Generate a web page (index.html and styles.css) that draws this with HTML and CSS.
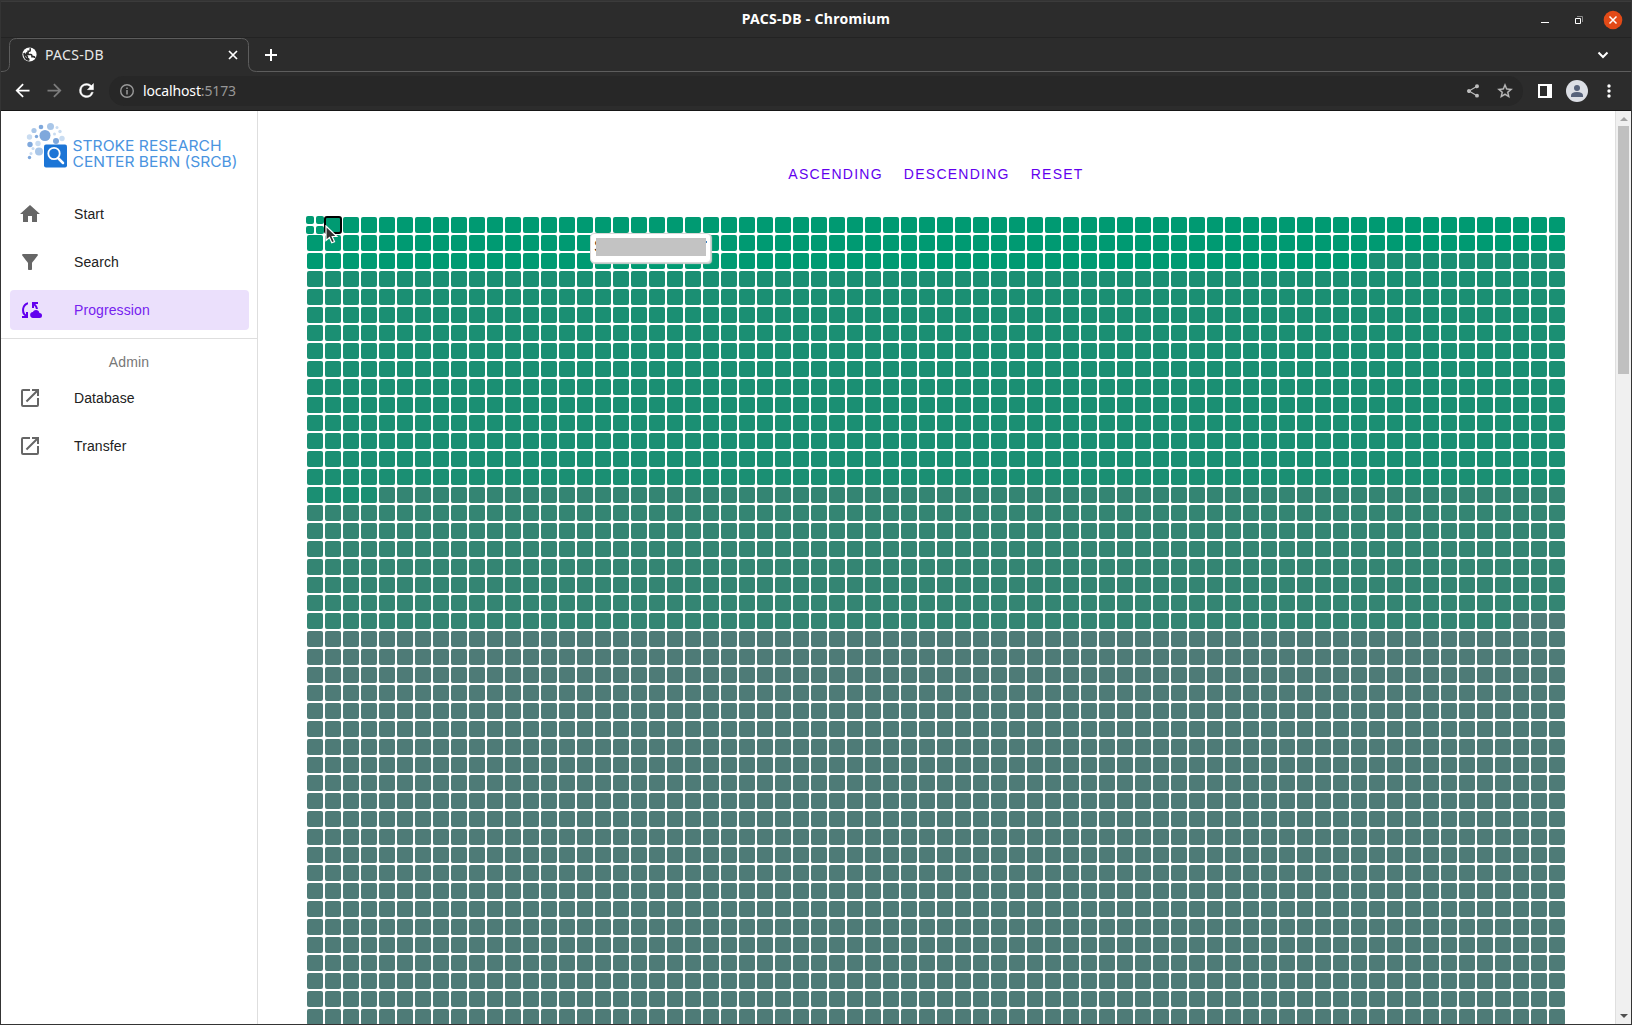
FILE: index.html
```html
<!DOCTYPE html>
<html lang="en">
<head>
<meta charset="utf-8">
<title>PACS-DB</title>
<link rel="stylesheet" href="styles.css">
</head>
<body>
<div class="window">
  <header class="titlebar">
    <span class="window-title">PACS-DB - Chromium</span>
    <div class="window-buttons">
      <svg width="100" height="24" viewBox="0 0 100 24">
        <path d="M10 15.500h8" stroke="#fff"/>
        <path d="M44.500 11.500h5v5h-5z" fill="none" stroke="#fff"/>
        <path d="M46 9.500h5.500v5.500" fill="none" stroke="#888"/>
        <circle cx="82" cy="13" r="9.300" fill="#e24a17"/>
        <path d="M78.500 9.500l7 7m0-7l-7 7" stroke="#fff" stroke-width="1.500"/>
      </svg>
    </div>
  </header>
  <div class="tabstrip">
    <svg class="tab-outline" width="1630" height="35" viewBox="0 0 1630 35"><path d="M0 34.500c6 0 8.500-2 8.500-8V8.500q0-7 7-7H240.500q7 0 7 7v18q0 8 8 8H1630" fill="none" stroke="#5d5d5d"/></svg>
    <div class="tab">
      <svg class="favicon" width="17" height="17" viewBox="0 0 24 24"><circle cx="12" cy="12" r="10" fill="#fff"/><path d="M4 10l5 5v2l2 1.500V20.500M4 10q1 9 7 10M13 3v3q0 1.500-2 1.500h-1V10h-2v2h6q1.500 0 1.500 3h2q2 0 2 2" fill="none" stroke="#2c2c2c" stroke-width="2.200"/></svg>
      <span class="tab-title">PACS-DB</span>
      <svg width="10" height="10" viewBox="0 0 10 10"><path d="M1 1l8 8m0-8l-8 8" stroke="#fff" stroke-width="1.700"/></svg>
    </div>
    <svg class="new-tab" width="12" height="12" viewBox="0 0 12 12"><path d="M6 0v12M0 6h12" stroke="#fff" stroke-width="2"/></svg>
    <svg class="tab-search" width="12" height="8" viewBox="0 0 12 8"><path d="M1.500 1.500L6 6l4.500-4.500" fill="none" stroke="#fff" stroke-width="2"/></svg>
  </div>
  <div class="toolbar">
    <div class="nav">
      <svg width="21" height="21" viewBox="0 0 24 24" fill="#fff"><path d="M20 11H7.830l5.590-5.590L12 4l-8 8 8 8 1.410-1.410L7.830 13H20z"/></svg>
      <svg width="21" height="21" viewBox="0 0 24 24" fill="#7c7c7c"><path d="M12 4l-1.410 1.410L16.170 11H4v2h12.170l-5.580 5.590L12 20l8-8z"/></svg>
      <svg width="21" height="21" viewBox="0 0 24 24" fill="#fff"><path stroke="#fff" stroke-width=".5" d="M17.650 6.350A7.960 7.960 0 0 0 12 4a8 8 0 1 0 7.730 10h-2.080A6 6 0 1 1 12 6c1.660 0 3.140.69 4.220 1.780L13 11h7V4z"/></svg>
    </div>
    <div class="omnibox">
      <svg width="16" height="16" viewBox="0 0 16 16"><circle cx="8" cy="8" r="6.300" fill="none" stroke="#9a9a9a" stroke-width="1.400"/><path d="M8 7v4.500M8 4.400v1.600" stroke="#9a9a9a" stroke-width="1.500"/></svg>
      <span class="url">localhost<span>:5173</span></span>
      <svg class="share" width="16" height="16" viewBox="0 0 24 24" fill="#bdbdbd"><path d="M18 16.080c-.76 0-1.440.3-1.960.77L8.910 12.700c.05-.23.09-.46.09-.7s-.04-.47-.09-.7l7.050-4.110c.54.5 1.250.81 2.040.81a3 3 0 1 0-3-3c0 .24.04.47.09.7L8.040 9.810A3 3 0 1 0 8.040 14.190l7.120 4.160c-.05.21-.08.43-.08.65a2.920 2.920 0 1 0 2.920-2.920z"/></svg>
      <svg width="18" height="18" viewBox="0 0 24 24" fill="#bdbdbd"><path stroke="#bdbdbd" stroke-width=".4" d="M22 9.240l-7.190-.62L12 2 9.190 8.630 2 9.240l5.460 4.730L5.820 21 12 17.270 18.180 21l-1.630-7.030zM12 15.400l-3.760 2.270 1-4.280-3.320-2.880 4.380-.38L12 6.100l1.710 4.040 4.380.38-3.320 2.880 1 4.280z"/></svg>
    </div>
    <svg class="panel" width="14" height="14" viewBox="0 0 14 14"><path fill="#fff" fill-rule="evenodd" d="M0 0h14v14H0zM2 2v10h7V2z"/></svg>
    <svg class="avatar" width="22" height="22" viewBox="0 0 22 22"><circle cx="11" cy="11" r="11" fill="#dcdfe5"/><circle cx="11" cy="8" r="3" fill="#56627a"/><path d="M5 17v-1.500q0-3.500 6-3.500t6 3.500V17z" fill="#56627a"/></svg>
    <svg class="menu" width="4" height="14" viewBox="0 0 4 14" fill="#fff"><circle cx="2" cy="2" r="1.700"/><circle cx="2" cy="7" r="1.700"/><circle cx="2" cy="12" r="1.700"/></svg>
  </div>

  <div class="page">
    <aside class="sidebar">
      <svg class="logo" width="220" height="56" viewBox="20 118 220 56">
        <g fill="#7fa8dc"><circle cx="45" cy="135.500" r="5.500"/><circle cx="41" cy="127" r="2.300"/><circle cx="56" cy="141" r="3"/><circle cx="30" cy="144.500" r="2.700"/><circle cx="36.500" cy="136.500" r="1.700"/><circle cx="29.500" cy="157.500" r="1.700"/></g>
        <g fill="#a9c6e8"><circle cx="50.500" cy="126.500" r="3.500"/><circle cx="34" cy="130.500" r="2.600"/><circle cx="39" cy="151.500" r="4"/></g>
        <g fill="#c9dcf1"><circle cx="29.500" cy="137" r="2.700"/><circle cx="38" cy="143.500" r="2.700"/><circle cx="62" cy="138.500" r="2.700"/><circle cx="57" cy="127.500" r="1.500"/><circle cx="60" cy="131.500" r="1.700"/><circle cx="54.500" cy="134" r="1.500"/><circle cx="33" cy="148.500" r="1.500"/><circle cx="31" cy="153.500" r="1.500"/></g>
        <rect x="44" y="144.500" width="23" height="23" rx="2" fill="#1c75d6"/>
        <circle cx="54" cy="153.500" r="5.700" fill="none" stroke="#fff" stroke-width="1.800"/><path d="M58 158l5 5" stroke="#fff" stroke-width="2.500" stroke-linecap="round"/>
        <text x="72.500" y="151" textLength="149" lengthAdjust="spacingAndGlyphs">STROKE RESEARCH</text>
        <text x="72.500" y="166.500" textLength="165" lengthAdjust="spacingAndGlyphs">CENTER BERN (SRCB)</text>
      </svg>
      <nav class="list">
        <a class="item"><svg width="24" height="24" viewBox="0 0 24 24"><path d="M10 20v-6h4v6h5v-8h3L12 3 2 12h3v8z"/></svg>Start</a>
        <a class="item"><svg width="24" height="24" viewBox="0 0 24 24"><path d="M4.250 5.610C6.270 8.200 10 13 10 13v6c0 .55.45 1 1 1h2c.55 0 1-.45 1-1v-6s3.720-4.800 5.740-7.390A1 1 0 0 0 18.950 4H5.040a1 1 0 0 0-.79 1.610z"/></svg>Search</a>
        <a class="item active"><svg width="24" height="24" viewBox="0 0 24 24"><path d="M21.500 14.980l-.05.01C21.200 13.300 19.760 12 18 12c-1.400 0-2.600.83-3.160 2.020A3 3 0 0 0 15 20l6.500-.02a2.500 2.500 0 0 0 0-5zM10 4.260v2.090A6 6 0 0 0 8 16.440V14h2v6H4v-2h2.730A8 8 0 0 1 10 4.260zM20 6h-2.730c1.430 1.260 2.410 3.010 2.660 5h-2.020A6 6 0 0 0 16 7.560V10h-2V4h6z"/></svg>Progression</a>
      </nav>
      <div class="group-label">Admin</div>
      <nav class="list admin">
        <a class="item"><svg width="24" height="24" viewBox="0 0 24 24"><path d="M19 19H5V5h7V3H5a2 2 0 0 0-2 2v14a2 2 0 0 0 2 2h14a2 2 0 0 0 2-2v-7h-2zM14 3v2h3.590l-9.830 9.830 1.410 1.410L19 6.410V10h2V3z"/></svg>Database</a>
        <a class="item"><svg width="24" height="24" viewBox="0 0 24 24"><path d="M19 19H5V5h7V3H5a2 2 0 0 0-2 2v14a2 2 0 0 0 2 2h14a2 2 0 0 0 2-2v-7h-2zM14 3v2h3.590l-9.830 9.830 1.410 1.410L19 6.410V10h2V3z"/></svg>Transfer</a>
      </nav>
    </aside>
    <main class="content">
      <div class="actions"><button>Ascending</button><button>Descending</button><button>Reset</button></div>
      <div class="grid" id="grid"></div>
    </main>
    <div class="scrollbar">
      <svg width="8" height="4" viewBox="0 0 8 4"><path d="M4 0l4 4H0z" fill="#a3a3a3"/></svg>
      <div class="thumb"></div>
      <svg class="down" width="8" height="4" viewBox="0 0 8 4"><path d="M4 4l4-4H0z" fill="#505050"/></svg>
    </div>
  </div>
  <div class="tooltip"><span class="tip-text">S</span><span class="redacted"></span><span class="tip-end"></span></div>
  <svg class="cursor" width="14" height="20" viewBox="0 0 14 20"><path d="M1 1v14.500l3.500-3 2.300 5.300 2.700-1.200-2.300-5.100h4.600z" fill="#303030" stroke="#fff" stroke-width="1.200"/></svg>
</div>
<script src="grid.js"></script>
</body>
</html>
```
FILE: styles.css
```css
* { box-sizing: border-box; }
body { margin: 0; background: #2c2c2c; font-family: "Liberation Sans", Arial, sans-serif; }
svg { display: block; flex: none; }
.window { position: relative; width: 1632px; height: 1025px; overflow: hidden; display: flex; flex-direction: column; border: 1px solid #343434; background: #2c2c2c; }

.titlebar { height: 37px; flex: none; display: grid; grid-template-columns: 1fr auto 1fr; align-items: center; padding-bottom: 2px; border-top: 1px solid #3b3b3b; border-bottom: 1px solid #232323; }
.window-title { grid-column: 2; color: #fff; font: bold 14px "Noto Sans", sans-serif; letter-spacing: .28px; }
.window-buttons { justify-self: end; }

.tabstrip { position: relative; height: 34px; flex: none; display: flex; align-items: center; padding-left: 20px; }
.tab-outline { position: absolute; left: 0; top: -1px; }
.tab { width: 217px; display: flex; align-items: center; }
.favicon { margin-bottom: 1px; }
.tab-title { flex: 1; margin: 0 0 2px 7px; color: #e8e8e8; font: 14px "Noto Sans", sans-serif; letter-spacing: .3px; }
.new-tab { margin-left: 27px; }
.tab-search { margin-left: auto; margin-right: 22px; }

.toolbar { height: 39px; flex: none; display: flex; align-items: center; padding: 0 18px 1px 11px; border-bottom: 1px solid #161616; }
.nav { display: flex; gap: 11px; width: 97px; }
.omnibox { width: 1414px; height: 30px; display: flex; align-items: center; border-radius: 15px; background: #272727; padding: 0 9px 0 10px; }
.url { flex: 1; margin: 0 0 1px 8px; color: #fff; font: 14px "Noto Sans", sans-serif; letter-spacing: -.15px; }
.url span { color: #979797; }
.share { margin-right: 15px; }
.panel { margin-left: 15px; }
.avatar { margin-left: 14px; }
.menu { margin-left: 19px; }

.page { flex: 1; min-height: 0; display: flex; background: #fff; overflow: hidden; }
.sidebar { width: 257px; flex: none; border-right: 1px solid #dedede; padding-top: 7px; }
.logo { margin-left: 19px; }
.logo text { font: 400 15px Inter, Lato, sans-serif; fill: #4a94df; }
.list { display: flex; flex-direction: column; gap: 8px; padding: 20px 8px 8px 9px; border-bottom: 1px solid #dedede; }
.item { height: 40px; border-radius: 4px; display: flex; align-items: center; gap: 32px; padding-left: 8px; font-size: 14px; letter-spacing: .1px; color: #212121; }
.item svg { fill: #666; }
.active { background: #ebe0fc; color: #7622ef; }
.active svg { fill: #6200ee; }
.group-label { height: 39px; display: flex; align-items: center; justify-content: center; padding-top: 7px; font-size: 14px; letter-spacing: .2px; color: #777; }
.admin { padding-top: 0; border: 0; }

.content { flex: 1; min-width: 0; padding: 45px 0 0 49px; }
.actions { width: 1258px; height: 36px; display: flex; justify-content: center; gap: 5px; margin-bottom: 25px; }
.actions button { border: 0; background: none; padding: 0 8px; color: #6200ee; font: 14px "Liberation Sans", Arial, sans-serif; letter-spacing: 1.25px; text-transform: uppercase; }
.grid { display: grid; grid-template-columns: repeat(70, 16px); grid-auto-rows: 16px; gap: 2px; }
.cell { border-radius: 2px; }
.high { background: #009a72; }
.good { background: #1b8f73; }
.medium { background: #348573; }
.low { background: #4e7b77; }
.split { margin: -1px; display: grid; grid-template-columns: 8px 8px; grid-auto-rows: 8px; gap: 2px; }
.split i { border-radius: 2px; background: #009a72; }
.selected { margin: -1px; border: 2px solid #000; border-radius: 3px; }

.scrollbar { width: 16px; flex: none; display: flex; flex-direction: column; align-items: center; background: #f0f0f0; border-left: 1px solid #dfdfdf; padding: 6px 0; }
.thumb { width: 11px; height: 248px; margin-top: 5px; background: #c0c0c0; }
.down { margin-top: auto; }

.tooltip { position: absolute; left: 589px; top: 232px; width: 121px; height: 30px; display: flex; align-items: flex-start; padding: 4px 3px; border: 1px solid #d8d8d8; border-radius: 4px; background: #fff; box-shadow: 1px 1px 1px #d0d0d0; }
.tip-text { width: 2px; overflow: hidden; font-size: 16px; line-height: 18px; color: #222; }
.redacted { width: 110px; height: 18px; background: #c3c3c3; }
.tip-end { width: 1px; height: 2px; margin-top: 3px; background: #397fc0; }
.cursor { position: absolute; left: 324px; top: 224px; }
```
FILE: grid.js
```js
const COLUMNS = 70;
const ROWS = 45;
// Index at which each progression level ends.
const levels = [[199, "high"], [1054, "good"], [1607, "medium"], [Infinity, "low"]];

const grid = document.getElementById("grid");
for (let i = 0; i < COLUMNS * ROWS; i++) {
  const cell = document.createElement("div");
  if (i === 0) {
    cell.className = "split";
    for (let part = 0; part < 4; part++) cell.append(document.createElement("i"));
  } else {
    cell.className = "cell " + levels.find(([end]) => i < end)[1];
    if (i === 1) cell.classList.add("selected");
  }
  grid.append(cell);
}
```
